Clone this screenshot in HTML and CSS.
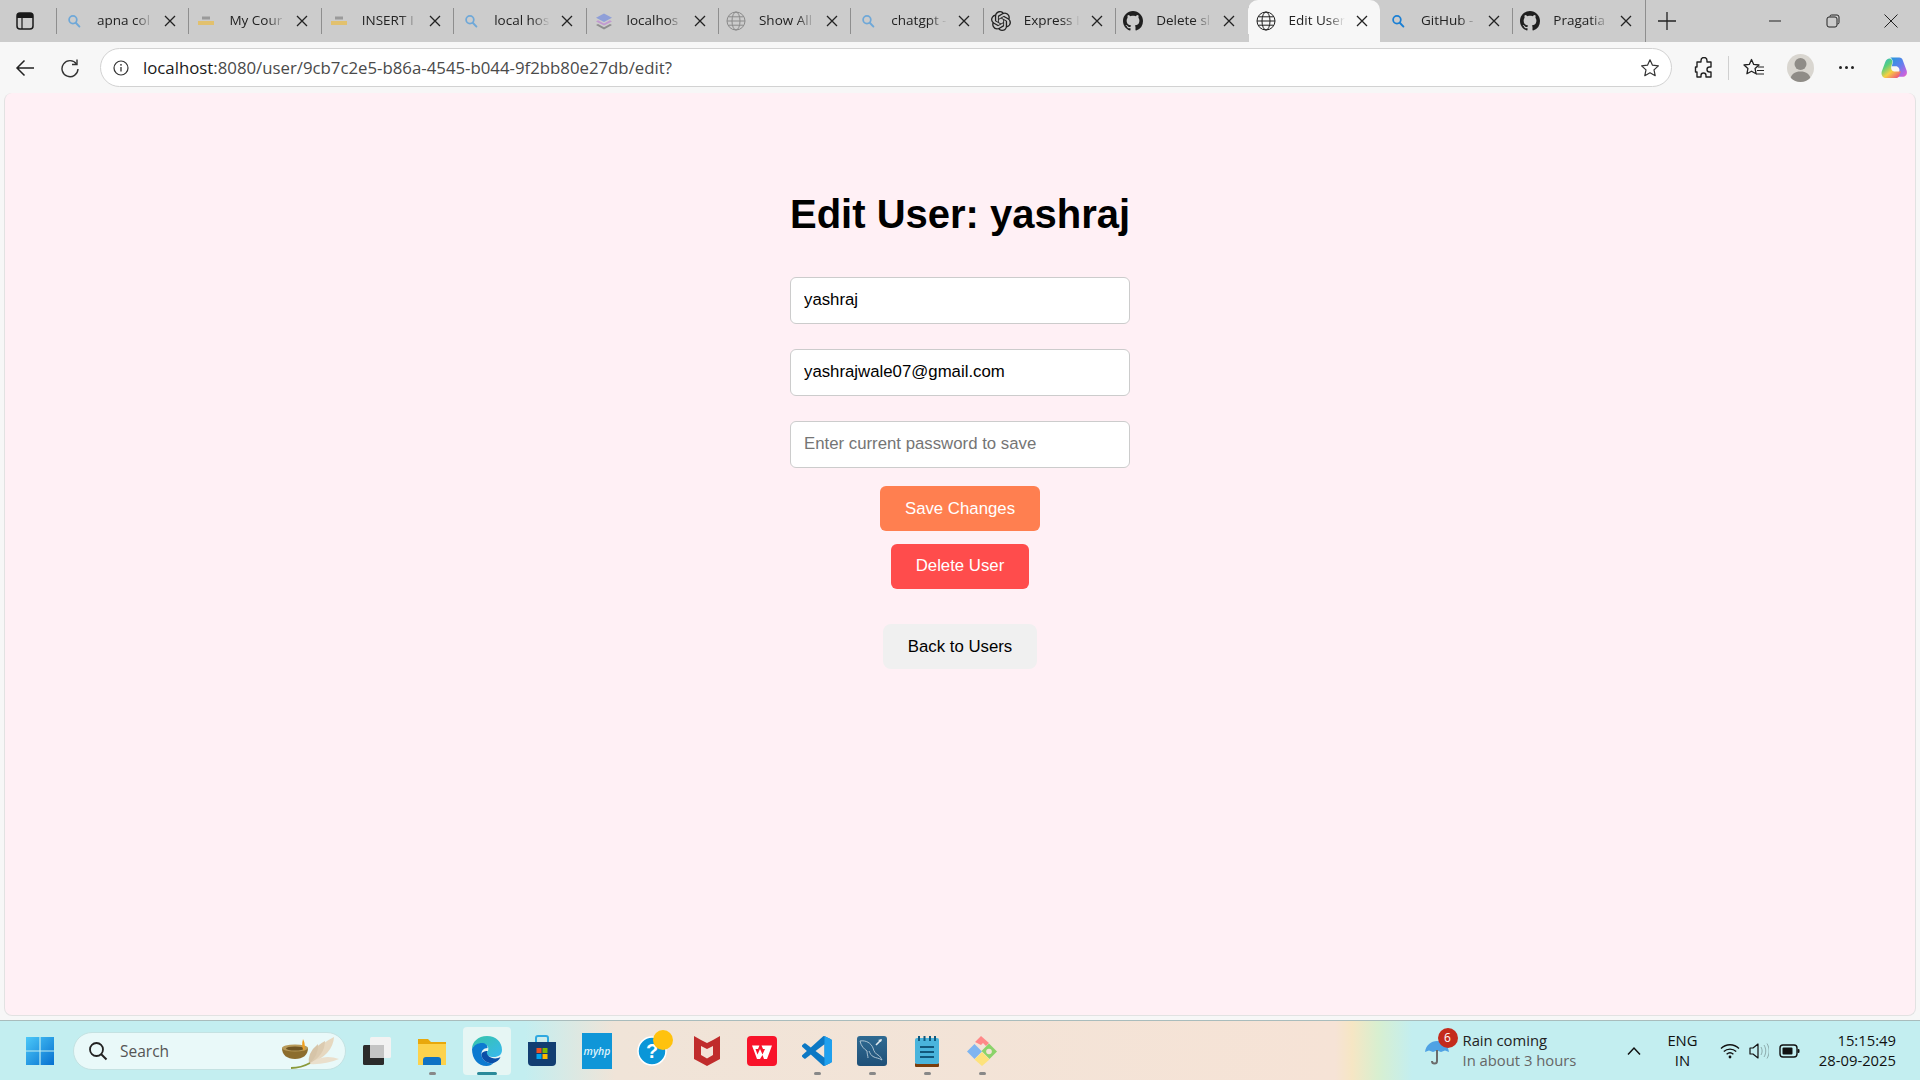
FILE: index.html
```html
<!DOCTYPE html>
<html lang="en">
<head>
<meta charset="utf-8">
<title>Edit User</title>
<link rel="stylesheet" href="styles.css">
</head>
<body>
<svg class="defs" aria-hidden="true">
  <symbol id="i-search" viewBox="0 0 16 16"><circle cx="6.8" cy="6.6" r="4.4" fill="none" stroke="currentColor" stroke-width="2"/><path d="M10 10l4.2 4.4" stroke="currentColor" stroke-width="2.2" stroke-linecap="round"/></symbol>
  <symbol id="i-x" viewBox="0 0 12 12"><path d="M1 1l10 10M11 1L1 11" stroke="currentColor" stroke-width="1.3" fill="none"/></symbol>
  <symbol id="i-apna" viewBox="0 0 18 12"><rect x="5" y="1.5" width="8" height="3" fill="#9a9a9a"/><rect x="1" y="6" width="16" height="4" fill="#e2c16e"/></symbol>
  <symbol id="i-globe" viewBox="0 0 20 20"><g fill="none" stroke="currentColor" stroke-width="1"><circle cx="10" cy="10" r="9"/><ellipse cx="10" cy="10" rx="4" ry="9"/><path d="M1 10h18M2.2 5.8h15.6M2.2 14.2h15.6"/></g></symbol>
  <symbol id="i-gh" viewBox="0 0 16 16"><path fill="currentColor" d="M8 0C3.58 0 0 3.58 0 8c0 3.54 2.29 6.53 5.47 7.59.4.07.55-.17.55-.38 0-.19-.01-.82-.01-1.49-2.01.37-2.53-.49-2.69-.94-.09-.23-.48-.94-.82-1.13-.28-.15-.68-.52-.01-.53.63-.01 1.08.58 1.23.82.72 1.21 1.87.87 2.33.66.07-.52.28-.87.51-1.07-1.78-.2-3.64-.89-3.64-3.95 0-.87.31-1.59.82-2.15-.08-.2-.36-1.02.08-2.12 0 0 .67-.21 2.2.82.64-.18 1.32-.27 2-.27.68 0 1.36.09 2 .27 1.53-1.04 2.2-.82 2.2-.82.44 1.1.16 1.92.08 2.12.51.56.82 1.27.82 2.15 0 3.07-1.87 3.75-3.65 3.95.29.25.54.73.54 1.48 0 1.07-.01 1.93-.01 2.2 0 .21.15.46.55.38A8.013 8.013 0 0016 8c0-4.42-3.58-8-8-8z"/></symbol>
</svg>

<header class="tabstrip">
  <div class="sidebar-btn">
    <svg width="18" height="18" viewBox="0 0 18 18"><rect x="1" y="1" width="16" height="16" rx="3" fill="none" stroke="#1a1a1a" stroke-width="1.5"/><path d="M1 4a3 3 0 013-3h10a3 3 0 013 3v2H1z" fill="#1a1a1a"/><path d="M6 6v11" stroke="#1a1a1a" stroke-width="1.2"/></svg>
  </div>
  <div class="tab"><svg class="fav fav-s"><use href="#i-search"/></svg><span class="tab-title">apna col</span><svg class="tab-x"><use href="#i-x"/></svg></div>
  <div class="tab"><svg class="fav"><use href="#i-apna"/></svg><span class="tab-title">My Cour</span><svg class="tab-x"><use href="#i-x"/></svg></div>
  <div class="tab"><svg class="fav"><use href="#i-apna"/></svg><span class="tab-title">INSERT I</span><svg class="tab-x"><use href="#i-x"/></svg></div>
  <div class="tab"><svg class="fav fav-s"><use href="#i-search"/></svg><span class="tab-title">local hos</span><svg class="tab-x"><use href="#i-x"/></svg></div>
  <div class="tab"><svg class="fav fav-big" viewBox="0 0 20 20"><path d="M10 11l8-4.200L10 2.500 2 6.800z" fill="#8f9fd8"/><path d="M4 9.300l6 3.200 6-3.200 2 1.100-8 4.200-8-4.200z" fill="#c29ad0"/><path d="M4 13l6 3.200L16 13l2 1.100-8 4.400-8-4.400z" fill="#8e8e8e"/></svg><span class="tab-title">localhos</span><svg class="tab-x"><use href="#i-x"/></svg></div>
  <div class="tab"><svg class="fav fav-big fav-g"><use href="#i-globe"/></svg><span class="tab-title">Show All</span><svg class="tab-x"><use href="#i-x"/></svg></div>
  <div class="tab"><svg class="fav fav-s"><use href="#i-search"/></svg><span class="tab-title">chatgpt -</span><svg class="tab-x"><use href="#i-x"/></svg></div>
  <div class="tab"><svg class="fav fav-big" viewBox="0 0 24 24"><path fill="#222" d="M22.2819 9.8211a5.9847 5.9847 0 0 0-.5157-4.9108 6.0462 6.0462 0 0 0-6.5098-2.9A6.0651 6.0651 0 0 0 4.9807 4.1818a5.9847 5.9847 0 0 0-3.9977 2.9 6.0462 6.0462 0 0 0 .7427 7.0966 5.98 5.98 0 0 0 .511 4.9107 6.051 6.051 0 0 0 6.5146 2.9001A5.9847 5.9847 0 0 0 13.2599 24a6.0557 6.0557 0 0 0 5.7718-4.2058 5.9894 5.9894 0 0 0 3.9977-2.9001 6.0557 6.0557 0 0 0-.7475-7.0729zm-9.022 12.6081a4.4755 4.4755 0 0 1-2.8764-1.0408l.1419-.0804 4.7783-2.7582a.7948.7948 0 0 0 .3927-.6813v-6.7369l2.02 1.1686a.071.071 0 0 1 .038.052v5.5826a4.504 4.504 0 0 1-4.4945 4.4944zm-9.6607-4.1254a4.4708 4.4708 0 0 1-.5346-3.0137l.142.0852 4.783 2.7582a.7712.7712 0 0 0 .7806 0l5.8428-3.3685v2.3324a.0804.0804 0 0 1-.0332.0615L9.74 19.9502a4.4992 4.4992 0 0 1-6.1408-1.6464zM2.3408 7.8956a4.485 4.485 0 0 1 2.3655-1.9728V11.6a.7664.7664 0 0 0 .3879.6765l5.8144 3.3543-2.0201 1.1685a.0757.0757 0 0 1-.071 0l-4.8303-2.7865A4.504 4.504 0 0 1 2.3408 7.872zm16.5963 3.8558L13.1038 8.364 15.1192 7.2a.0757.0757 0 0 1 .071 0l4.8303 2.7913a4.4944 4.4944 0 0 1-.6765 8.1042v-5.6772a.79.79 0 0 0-.407-.667zm2.0107-3.0231l-.142-.0852-4.7735-2.7818a.7759.7759 0 0 0-.7854 0L9.409 9.2297V6.8974a.0662.0662 0 0 1 .0284-.0615l4.8303-2.7866a4.4992 4.4992 0 0 1 6.6802 4.66zM8.3065 12.863l-2.02-1.1638a.0804.0804 0 0 1-.038-.0567V6.0742a4.4992 4.4992 0 0 1 7.3757-3.4537l-.142.0805L8.704 5.459a.7948.7948 0 0 0-.3927.6813zm1.0976-2.3654l2.602-1.4998 2.6069 1.4998v2.9994l-2.5974 1.4997-2.6067-1.4997Z"/></svg><span class="tab-title">Express I</span><svg class="tab-x"><use href="#i-x"/></svg></div>
  <div class="tab"><svg class="fav fav-big fav-k"><use href="#i-gh"/></svg><span class="tab-title">Delete sl</span><svg class="tab-x"><use href="#i-x"/></svg></div>
  <div class="tab tab-active"><svg class="fav fav-big fav-k"><use href="#i-globe"/></svg><span class="tab-title">Edit User</span><svg class="tab-x"><use href="#i-x"/></svg></div>
  <div class="tab tab-nosep"><svg class="fav fav-s fav-b"><use href="#i-search"/></svg><span class="tab-title">GitHub -</span><svg class="tab-x"><use href="#i-x"/></svg></div>
  <div class="tab"><svg class="fav fav-big fav-k"><use href="#i-gh"/></svg><span class="tab-title">Pragatia</span><svg class="tab-x"><use href="#i-x"/></svg></div>
  <div class="tab-end">
    <svg width="18" height="18" viewBox="0 0 18 18"><path d="M9 0v18M0 9h18" stroke="#222" stroke-width="1.300"/></svg>
  </div>
  <div class="win-controls">
    <svg width="14" height="14" viewBox="0 0 14 14"><path d="M1 7h12" stroke="#222" stroke-width="1"/></svg>
    <svg width="14" height="14" viewBox="0 0 14 14"><path d="M4 2.500V2a1.500 1.500 0 011.500-1H11a2 2 0 012 2v5.500A1.500 1.500 0 0111.500 10" fill="none" stroke="#222"/><rect x="1" y="3" width="10" height="10" rx="2" fill="none" stroke="#222"/></svg>
    <svg width="14" height="14" viewBox="0 0 14 14"><path d="M.5.500l13 13M13.500.500l-13 13" stroke="#222" stroke-width="1"/></svg>
  </div>
</header>

<nav class="toolbar">
  <svg class="tb-back" width="20" height="18" viewBox="0 0 20 18"><path d="M19 9H2M9.500 1.500L2 9l7.500 7.500" fill="none" stroke="#222" stroke-width="1.500"/></svg>
  <svg class="tb-reload" width="20" height="20" viewBox="0 0 20 20"><path d="M16.500 6A8 8 0 1018 11" fill="none" stroke="#333" stroke-width="1.400"/><path d="M17 1.500V6.500H12" fill="none" stroke="#333" stroke-width="1.400"/></svg>
  <div class="address">
    <svg width="16" height="16" viewBox="0 0 16 16"><circle cx="8" cy="8" r="7" fill="none" stroke="#333" stroke-width="1.200"/><path d="M8 7v4.500" stroke="#333" stroke-width="1.300"/><circle cx="8" cy="4.800" r=".9" fill="#333"/></svg>
    <span class="url"><span class="url-host">localhost</span>:8080/user/9cb7c2e5-b86a-4545-b044-9f2bb80e27db/edit?</span>
    <svg class="star" width="20" height="20" viewBox="0 0 20 20"><path d="M10 1.800l2.500 5.400 5.900.7-4.400 4 1.200 5.800L10 14.800l-5.200 2.900L6 11.900l-4.400-4 5.900-.7z" fill="none" stroke="#333" stroke-width="1.200" stroke-linejoin="round"/></svg>
  </div>
  <div class="tb-actions">
    <svg width="20" height="22" viewBox="0 0 20 22"><path d="M7 3.500a3 3 0 016 0V5h4v5h-1.500a2.500 2.500 0 000 5H17v5h-5v-1.500a2.500 2.500 0 00-5 0V20H3v-5H1.500V10H3V5h4z" fill="none" stroke="#222" stroke-width="1.400" stroke-linejoin="round"/></svg>
    <span class="tb-divider"></span>
    <svg width="22" height="20" viewBox="0 0 22 20"><path d="M8.500 1.500l2.200 4.900 5.300.6-3.900 3.600 1 5.200-4.600-2.600-4.600 2.600 1-5.200L1 7l5.300-.6z" fill="none" stroke="#222" stroke-width="1.300" stroke-linejoin="round"/><path d="M15 9h6M14 12.500h7M13 16h8" stroke="#222" stroke-width="1.200"/></svg>
    <span class="avatar"><svg width="27" height="28" viewBox="0 0 27 28"><circle cx="13.500" cy="10" r="6" fill="#8f8c87"/><path d="M3 28c0-8 5-10.500 10.500-10.500S24 20 24 28z" fill="#8f8c87"/></svg></span>
    <span class="dots"><i></i><i></i><i></i></span>
    <svg class="copilot" width="28" height="28" viewBox="0 0 32 28"><defs><linearGradient id="cp1" x1="0" y1="0" x2="1" y2="1"><stop offset="0" stop-color="#1f9bd8"/><stop offset=".5" stop-color="#5f80ee"/><stop offset=".85" stop-color="#c264e0"/><stop offset="1" stop-color="#ea6ab0"/></linearGradient><linearGradient id="cp2" x1="0" y1="0" x2=".8" y2="1"><stop offset="0" stop-color="#2fb4d8"/><stop offset=".35" stop-color="#58cf7c"/><stop offset=".65" stop-color="#f6d040"/><stop offset="1" stop-color="#f0567a"/></linearGradient></defs><path d="M11 2H22c2 0 3.500 1 4 3l4.500 12c1 4-1 7-5 7H20l2-6c1-3-1-6-4-6H13.500l1-4c.5-3-1.500-6-3.500-6z" fill="url(#cp1)"/><path d="M11 3C8.500 3 7 4.500 6 7L2 18c-1 4 1 7.500 5 7.500h11c2 0 3.500-1 4-3L24 18h-7c-3 0-5-2.500-4-6l1-4c.7-2.500-1-5-3-5z" fill="url(#cp2)"/></svg>
  </div>
</nav>

<main class="pane">
  <div class="edit-card">
    <h1 class="title">Edit User: yashraj</h1>
    <form class="edit-form">
      <input class="field" type="text" value="yashraj">
      <input class="field" type="email" value="yashrajwale07@gmail.com">
      <input class="field" type="password" placeholder="Enter current password to save">
      <button class="btn btn-save" type="button">Save Changes</button>
      <button class="btn btn-delete" type="button">Delete User</button>
      <a class="btn btn-back" href="#">Back to Users</a>
    </form>
  </div>
</main>

<footer class="taskbar">
  <svg class="start" width="30" height="30" viewBox="0 0 30 30"><defs><linearGradient id="st" x1="0" y1="0" x2="1" y2="1"><stop offset="0" stop-color="#4cc8f8"/><stop offset="1" stop-color="#0670d0"/></linearGradient></defs><path d="M1 1h13.400v13.400H1zM15.600 1H29v13.400H15.600zM1 15.600h13.400V29H1zM15.600 15.600H29V29H15.600z" fill="url(#st)"/></svg>
  <div class="search-pill">
    <svg width="20" height="20" viewBox="0 0 20 20"><circle cx="8.500" cy="8.500" r="6.500" fill="none" stroke="#222" stroke-width="1.800"/><path d="M13 13l5.500 5.500" stroke="#222" stroke-width="2"/></svg>
    <span class="search-label">Search</span>
    <svg class="lamp" width="60" height="36" viewBox="0 0 60 36"><g fill="#e6d8c0"><path d="M28 31Q33 14 53 4Q52 22 28 31z"/><path d="M28 31Q29 16 44 8Q44 22 28 31z" fill="#dccbb0"/><path d="M28 31Q26 20 37 11Q38 22 28 31z" fill="#d6c4a8"/><path d="M28 31Q42 20 58 26Q44 32 28 31z" fill="#eadfcc"/></g><path d="M10 35Q20 35 29 30" fill="none" stroke="#8a9a3a" stroke-width="1.800"/><path d="M1 15c0 7 5 11 13 11s13-4 13-11z" fill="#8c6d2e"/><ellipse cx="14" cy="15" rx="13" ry="3.500" fill="#b79a5a"/><ellipse cx="14" cy="15.500" rx="9" ry="2" fill="#6f5523"/><path d="M22 6c1.500 3 2.500 6 1 12-2-3-2.500-7-1-12z" fill="#f0a020"/></svg>
  </div>
  <div class="apps">
    <span class="app"><svg width="30" height="30" viewBox="0 0 30 30"><rect x="1" y="9" width="21" height="20" rx="1.500" fill="#2b2b2b"/><rect x="8" y="1" width="21" height="21" rx="1.500" fill="#f2f2f2"/><rect x="8" y="9" width="14" height="13" fill="#c4c4c4"/></svg></span>
    <span class="app app-open"><svg width="30" height="30" viewBox="0 0 30 30"><path d="M1 3h10l3 3h15v23H1z" fill="#e8a80c"/><rect x="1" y="8" width="28" height="21" fill="#fcd24c"/><path d="M6 29v-5a3 3 0 013-3h12a3 3 0 013 3v5z" fill="#0f72c4"/></svg></span>
    <span class="app app-active"><svg width="32" height="32" viewBox="0 0 32 32"><defs><linearGradient id="ed" x1="0" y1="0" x2="1" y2="1"><stop offset="0" stop-color="#36c5a8"/><stop offset="1" stop-color="#38b8f0"/></linearGradient></defs><path d="M16 1c9 0 15 6 15 14 0 5-4 7-8 7-5 0-8-2-8-4 0-1 1-2 2-2 2-6-4-8-7-7C4 10 2 12 1 14 1 7 7 1 16 1z" fill="url(#ed)"/><path d="M1 14c2-4 6-6 10-6 3 0 6 2 5.500 5-4 0-6.500 3-6 7 .5 5 6 9 12 8-2 2-4 3-7 3C7 31 1 24 1 14z" fill="#0c7ad0"/><path d="M10.500 20c.5 5 6 9 12 8 3-1 6-3 7-6-3 2-9 2-12-1-2-2-2-4-1-5-3 0-6 1-6 4z" fill="#0b4fa8"/></svg></span>
    <span class="app"><svg width="30" height="32" viewBox="0 0 30 32"><path d="M9 7V3a2 2 0 012-2h8a2 2 0 012 2v4" fill="none" stroke="#2fa8e0" stroke-width="2"/><path d="M1 7h28v20a4 4 0 01-4 4H5a4 4 0 01-4-4z" fill="#123e72"/><rect x="9.500" y="13" width="5" height="5" fill="#f25022"/><rect x="15.500" y="13" width="5" height="5" fill="#7fba00"/><rect x="9.500" y="19" width="5" height="5" fill="#00a4ef"/><rect x="15.500" y="19" width="5" height="5" fill="#ffb900"/></svg></span>
    <span class="app"><span class="myhp">myhp</span></span>
    <span class="app"><svg width="48" height="48" viewBox="0 0 48 48"><circle cx="24" cy="24" r="14" fill="#0a96d8" stroke="#fff" stroke-width="1.500"/><text x="24" y="31" text-anchor="middle" class="help-q">?</text><circle cx="35" cy="13" r="10" fill="#ffc20e"/></svg></span>
    <span class="app"><svg width="28" height="32" viewBox="0 0 28 32"><path d="M1 1l7 4 6 3 6-3 7-4v23l-13 7-13-7z" fill="#c02c2c"/><path d="M8 11l6 3 6-3v9l-6 3.500L8 20z" fill="#f3e3d8"/></svg></span>
    <span class="app"><svg width="30" height="30" viewBox="0 0 30 30"><rect width="30" height="30" rx="4" fill="#f8132a"/><path d="M5 9.500h7.500L11 13H8.500l2 5.500L13 13l2.500 5.500L18 13h-2l-1.500-3.500H25L20 23h-3l-1.500-4-2.500 4h-3z" fill="#fff"/></svg></span>
    <span class="app app-open"><svg width="30" height="30" viewBox="0 0 24 24"><path fill="#0c78c4" d="M23.150 2.587L18.210.21a1.494 1.494 0 0 0-1.705.29l-9.460 8.630-4.120-3.128a.999.999 0 0 0-1.276.057L.327 7.261A1 1 0 0 0 .326 8.740L3.899 12 .326 15.260a1 1 0 0 0 .001 1.479L1.650 17.940a.999.999 0 0 0 1.276.057l4.120-3.128 9.460 8.630a1.492 1.492 0 0 0 1.704.29l4.942-2.377A1.500 1.500 0 0 0 24 20.060V3.939a1.500 1.500 0 0 0-.85-1.352zm-5.146 14.861L10.826 12l7.178-5.448v10.896z"/><path fill="#1fa0ee" d="M18 0.100a1.500 1.500 0 0 1 .21.110l4.940 2.377A1.500 1.500 0 0 1 24 3.939V20.060a1.500 1.500 0 0 1-.85 1.352l-4.942 2.377a1.500 1.500 0 0 1-.208.080V17.450L18.004 6.550z"/></svg></span>
    <span class="app app-open"><svg width="30" height="30" viewBox="0 0 30 30"><defs><linearGradient id="ms" x1="0" y1="0" x2="0" y2="1"><stop offset="0" stop-color="#2f6a92"/><stop offset="1" stop-color="#1f5078"/></linearGradient></defs><rect width="30" height="30" rx="3" fill="url(#ms)"/><path d="M3 5c6-1 11 2 13 7 1 4 3 6 5 7 2 1 3 3 4 5-3-2-6-2-8-3-3-1-4-4-5-6M3 5c1 5 4 8 7 10 0 3 1 5 1 7" fill="none" stroke="#b8ccd8" stroke-width=".9"/><path d="M19 9l5-5" stroke="#e4ecf0" stroke-width="1.600"/><path d="M21 4l4-1-1 3z" fill="#e4ecf0"/></svg></span>
    <span class="app app-open"><svg width="24" height="32" viewBox="0 0 24 32"><rect y="28" width="24" height="4" rx="1" fill="#7a3d0c"/><rect y="3" width="24" height="26" rx="2" fill="#4ab4dc"/><path d="M4 1v5M9.500 1v5M15 1v5M20 1v5" stroke="#0f5a80" stroke-width="2"/><path d="M5 12h14M5 17h14M5 22h14" stroke="#12587c" stroke-width="2"/></svg></span>
    <span class="app app-open"><svg width="32" height="32" viewBox="0 0 32 32"><path d="M8.500 9L16 16.500 8.500 24 1 16.500z" fill="#7fb5f0"/><path d="M15 1l8 7-3 3-3-3-2 2-6-3z" fill="#f88"/><path d="M23 8.500l8 8-7.500 7.500-8-8z" fill="#8bd36a"/><path d="M16 17l7.500 7.500L16 31l-7.500-6.500z" fill="#fde27c"/><circle cx="23" cy="16.500" r="2.800" fill="#f3e3d8"/></svg></span>
  </div>
  <div class="weather">
    <svg width="30" height="36" viewBox="0 0 30 36"><path d="M3 19C4 12 9 8 15 8s11 4 12 11l-4-1.500-4 1.500-4-1.500-4 1.500-4-1.500z" fill="#4fa2e4"/><path d="M15 17v11a2.500 2.500 0 01-5 0" fill="none" stroke="#6b6b6b" stroke-width="2"/></svg>
    <span class="badge">6</span>
    <div class="weather-text"><span>Rain coming</span><span class="weather-sub">In about 3 hours</span></div>
  </div>
  <div class="tray">
    <svg width="14" height="10" viewBox="0 0 14 10"><path d="M1 8.500l6-6.500 6 6.500" fill="none" stroke="#111" stroke-width="1.500"/></svg>
    <div class="lang"><span>ENG</span><span>IN</span></div>
    <svg class="wifi" width="20" height="17" viewBox="0 0 20 17"><g fill="none" stroke="#111" stroke-width="1.300"><path d="M1 6.500c5-5 13-5 18 0M3.800 9.500c3.400-3.300 9-3.300 12.400 0M6.600 12.300c2-1.800 4.800-1.800 6.800 0"/></g><circle cx="10" cy="15" r="1.400" fill="#111"/></svg>
    <svg class="speaker" width="20" height="18" viewBox="0 0 20 18"><path d="M1 6h3l5-4v14l-5-4H1z" fill="none" stroke="#111" stroke-width="1.200" stroke-linejoin="round"/><path d="M12 5c1.500 2.500 1.500 5.500 0 8M15 3c2.300 3.700 2.300 8.300 0 12M18 1.500c2.800 4.500 2.800 10.500 0 15" fill="none" stroke="#111" stroke-width="1" opacity=".3"/></svg>
    <svg class="battery" width="21" height="14" viewBox="0 0 21 14"><rect x="1" y="1" width="17" height="12" rx="3" fill="none" stroke="#111" stroke-width="1.400"/><rect x="3.500" y="3.500" width="10" height="7" rx="1" fill="#111"/><rect x="18.500" y="5" width="2" height="4" rx="1" fill="#111"/></svg>
    <div class="clock"><span>15:15:49</span><span>28-09-2025</span></div>
  </div>
</footer>
</body>
</html>
```

FILE: styles.css
```css
* { box-sizing: border-box; }

html, body { margin: 0; height: 100%; }

body {
  width: 1920px;
  height: 1080px;
  overflow: hidden;
  display: flex;
  flex-direction: column;
  background: #f7f7f7;
  font-family: "Open Sans", "Noto Sans", sans-serif;
  color: #1a1a1a;
}

.defs { width: 0; height: 0; overflow: hidden; flex: none; display: block; }

/* Tab strip */
.tabstrip {
  flex: none;
  height: 42px;
  display: flex;
  background: #cccccc;
}

.sidebar-btn {
  flex: none;
  width: 56px;
  padding-left: 16px;
  display: flex;
  align-items: center;
}

.tab {
  position: relative;
  flex: none;
  width: 132.4px;
  height: 42px;
  display: flex;
  align-items: center;
  border-left: 1px solid #8e8e8e;
  background-clip: padding-box;
}

.tab::before {
  content: "";
  position: absolute;
  left: -1px;
  top: 0;
  width: 1px;
  height: 8px;
  background: #cccccc;
}

.tab::after {
  content: "";
  position: absolute;
  left: -1px;
  bottom: 0;
  width: 1px;
  height: 8px;
  background: #cccccc;
}

.tab-active, .tab-nosep { border-left-color: transparent; }

.tab-active {
  background: #f7f7f7;
  border-radius: 10px 10px 0 0;
}

.fav {
  flex: none;
  width: 18px;
  height: 12px;
  margin-left: 8px;
  margin-right: 14px;
  color: #6fa8d8;
}

.fav-s { width: 14px; height: 14px; margin-left: 10px; margin-right: 16px; }
.fav-b { color: #1a7fd4; }
.fav-big { width: 20px; height: 20px; margin-left: 7px; margin-right: 13px; }
.fav-g { color: #8a8a8a; }
.fav-k { color: #1f1f1f; }

.tab-title {
  flex: none;
  width: 56px;
  padding-bottom: 2px;
  white-space: nowrap;
  font-size: 13.5px;
  color: #222;
  -webkit-mask-image: linear-gradient(90deg, #000 68%, transparent 100%);
  mask-image: linear-gradient(90deg, #000 68%, transparent 100%);
}

.tab-x {
  flex: none;
  width: 12px;
  height: 12px;
  margin-left: 11px;
  color: #222;
}

.tab-end {
  flex: none;
  height: 42px;
  padding-left: 12px;
  border-left: 1px solid #8e8e8e;
  display: flex;
  align-items: center;
  background-clip: padding-box;
}

.win-controls {
  margin-left: auto;
  padding-right: 22px;
  display: flex;
  align-items: center;
  gap: 44px;
}

/* Toolbar */
.toolbar {
  flex: none;
  height: 51px;
  padding: 6px 0;
  display: flex;
  align-items: center;
}

.tb-back { flex: none; margin-left: 15px; }
.tb-reload { flex: none; margin-left: 25px; }

.address {
  flex: none;
  width: 1572px;
  height: 39px;
  margin-left: 20px;
  padding: 0 9px 0 12px;
  display: flex;
  align-items: center;
  background: #ffffff;
  border: 1px solid #d2d2d2;
  border-radius: 20px;
}

.url {
  margin-left: 14px;
  font-size: 16.800px;
  color: #4a4a4a;
  white-space: nowrap;
}

.url-host { color: #1a1a1a; }
.star { margin-left: auto; margin-right: 2px; }

.tb-actions {
  flex: none;
  display: flex;
  align-items: center;
  margin-left: 22px;
}

.tb-divider { width: 1px; height: 24px; margin: 0 14px; background: #d0d0d0; }

.avatar {
  flex: none;
  display: block;
  width: 27px;
  height: 28px;
  margin-left: 22px;
  border-radius: 50%;
  overflow: hidden;
  background: #d9d6d0;
}

.avatar svg { display: block; }

.dots { display: flex; gap: 3px; margin-left: 25px; }
.dots i { width: 3px; height: 3px; border-radius: 50%; background: #222; }

.copilot { margin-left: 26px; }

/* Page */
.pane {
  flex: none;
  width: 1912px;
  height: 923px;
  margin-left: 4px;
  background: #fff0f5;
  border: 1px solid #e2e2e2;
  border-top: 0;
  border-radius: 8px;
  padding-top: 98px;
  display: flex;
  justify-content: center;
  font-family: "Liberation Sans", Arial, sans-serif;
}

.edit-card { width: 340px; }

.title {
  margin: 0 0 40px;
  font-size: 40px;
  font-weight: 700;
  line-height: 46px;
  text-align: center;
  white-space: nowrap;
  color: #000;
}

.edit-form {
  display: flex;
  flex-direction: column;
  align-items: center;
}

.field {
  width: 340px;
  height: 47px;
  margin-bottom: 25px;
  padding: 0 13px 2px;
  border: 1px solid #cccccc;
  border-radius: 6px;
  background: #fff;
  color: #000;
  font: 16.800px "Liberation Sans", Arial, sans-serif;
}

.field:nth-child(3) { margin-bottom: 18px; }

.field::placeholder { color: #757575; opacity: 1; }

.btn {
  height: 45px;
  padding: 0 25px;
  border: 0;
  border-radius: 6px;
  display: flex;
  align-items: center;
  justify-content: center;
  font: 16.800px "Liberation Sans", Arial, sans-serif;
  text-decoration: none;
  color: #fff;
}

.btn-save { background: #ff7f50; margin-bottom: 13px; }
.btn-delete { background: #ff4c4c; margin-bottom: 35px; padding-bottom: 2px; }
.btn-back { background: #f0f0f0; color: #000; border-radius: 8px; }

/* Taskbar */
.taskbar {
  flex: none;
  height: 60px;
  margin-top: 4px;
  display: flex;
  align-items: center;
  border-top: 1px solid #a9bcbc;
  background: linear-gradient(90deg, #c3eef0 0, #c3eef0 525px, #f0e4d8 615px, #f6e3d6 1335px, #f6e6c4 1352px, #d8efd0 1378px, #c3eef0 1412px, #c3eef0 100%);
  font-size: 14.800px;
}

.start { flex: none; margin-left: 25px; }

.search-pill {
  flex: none;
  width: 273px;
  height: 38px;
  margin-left: 18px;
  padding-left: 14px;
  display: flex;
  align-items: center;
  background: #e9f9f9;
  border: 1px solid #c4e2e2;
  border-radius: 19px;
}

.search-label { margin-left: 12px; font-size: 15.500px; color: #555; }
.lamp { margin-left: auto; margin-right: 4px; }

.apps { flex: none; display: flex; margin-left: 3.500px; }

.app {
  position: relative;
  flex: none;
  width: 55px;
  height: 48px;
  display: flex;
  align-items: center;
  justify-content: center;
}

.app-open::after, .app-active::after {
  content: "";
  position: absolute;
  left: 50%;
  bottom: 0;
  width: 7px;
  height: 3px;
  margin-left: -3.500px;
  border-radius: 2px;
  background: #888;
}

.app-active { border-radius: 4px; background: #e6f6f4; width: 48px; margin: 0 3.500px; }
.app-active::after { width: 20px; margin-left: -10px; background: #2a8a9a; }

.myhp {
  width: 30px;
  height: 36px;
  display: flex;
  align-items: center;
  justify-content: center;
  background: #0f96d8;
  color: #dff3fb;
  font-size: 10.500px;
  font-style: italic;
  font-weight: 600;
}

.help-q { font: 700 20px "Liberation Sans", sans-serif; fill: #fff; }

.weather {
  position: relative;
  flex: none;
  margin-left: 412px;
  display: flex;
  align-items: center;
}

.badge {
  position: absolute;
  left: 16px;
  top: -4px;
  width: 20px;
  height: 20px;
  border-radius: 50%;
  background: #c42b1c;
  color: #fff;
  font-size: 12px;
  text-align: center;
  line-height: 20px;
}

.weather-text {
  margin-left: 11px;
  display: flex;
  flex-direction: column;
  gap: 3px;
  line-height: 17px;
  white-space: nowrap;
  color: #222;
}

.weather-sub { color: #666; }

.tray {
  flex: 1;
  margin-left: 51px;
  padding-right: 24px;
  display: flex;
  align-items: center;
  color: #111;
}

.lang {
  margin-left: 26px;
  display: flex;
  flex-direction: column;
  align-items: center;
  gap: 3px;
  line-height: 17px;
}

.wifi { margin-left: 22px; }
.speaker { margin-left: 9px; }
.battery { margin-left: 10px; }

.clock {
  margin-left: auto;
  display: flex;
  flex-direction: column;
  align-items: flex-end;
  gap: 3px;
  line-height: 17px;
}
```
